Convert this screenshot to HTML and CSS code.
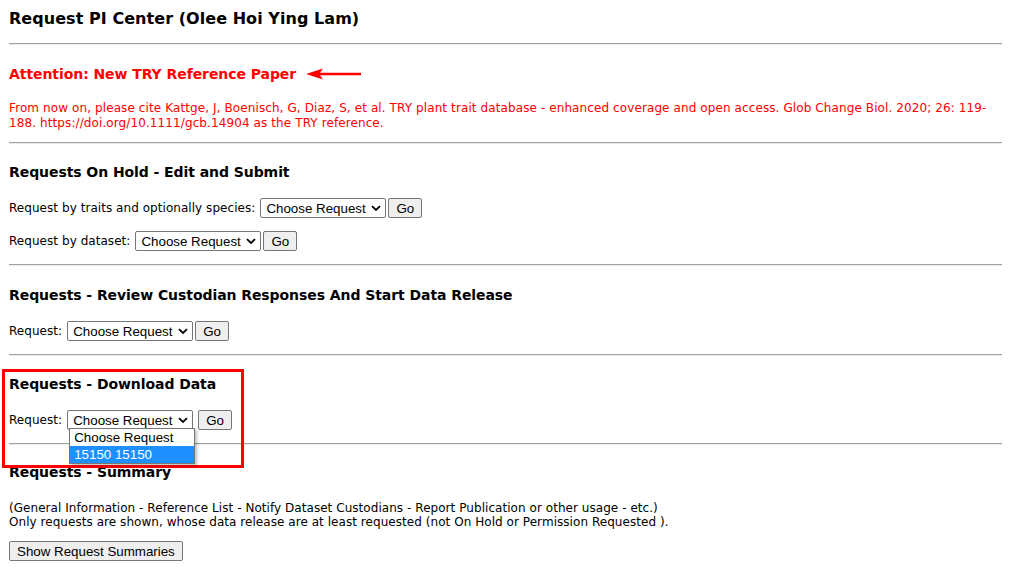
FILE: index.html
```html
<!DOCTYPE html>
<html lang="en">
<head>
<meta charset="utf-8">
<title>Request PI Center</title>
<link rel="stylesheet" href="styles.css">
</head>
<body>
<div class="page">
  <h1 class="title">Request PI Center (Olee Hoi Ying Lam)</h1>
  <hr class="rule rule-top">

  <section class="block notice">
    <h2 class="heading heading-red">Attention: New TRY Reference Paper
      <svg class="arrow" width="56" height="12" viewBox="0 0 56 12"><path d="M0 6 L17 0.5 L14 4.8 L55 4.8 L55 7.2 L14 7.2 L17 11.5 Z" fill="#ff0000"/></svg>
    </h2>
    <p class="notice-text">From now on, please cite Kattge, J, Boenisch, G, Diaz, S, et al. TRY plant trait database - enhanced coverage and open access. Glob Change Biol. 2020; 26: 119-188. https://doi.org/10.1111/gcb.14904 as the TRY reference.</p>
  </section>
  <hr class="rule">

  <section class="block">
    <h2 class="heading">Requests On Hold - Edit and Submit</h2>
    <div class="row">
      <span class="label">Request by traits and optionally species:</span>
      <span class="select">Choose Request<svg class="chev" width="10" height="7" viewBox="0 0 10 7"><path d="M1 1.2 L5 5 L9 1.2" fill="none" stroke="#000" stroke-width="1.8"/></svg></span>
      <button class="btn">Go</button>
    </div>
    <div class="row row-second">
      <span class="label">Request by dataset:</span>
      <span class="select">Choose Request<svg class="chev" width="10" height="7" viewBox="0 0 10 7"><path d="M1 1.2 L5 5 L9 1.2" fill="none" stroke="#000" stroke-width="1.8"/></svg></span>
      <button class="btn">Go</button>
    </div>
  </section>
  <hr class="rule">

  <section class="block block-review">
    <h2 class="heading">Requests - Review Custodian Responses And Start Data Release</h2>
    <div class="row">
      <span class="label">Request:</span>
      <span class="select">Choose Request<svg class="chev" width="10" height="7" viewBox="0 0 10 7"><path d="M1 1.2 L5 5 L9 1.2" fill="none" stroke="#000" stroke-width="1.8"/></svg></span>
      <button class="btn">Go</button>
    </div>
  </section>
  <hr class="rule">

  <section class="block download">
    <h2 class="heading">Requests - Download Data</h2>
    <div class="row">
      <span class="label">Request:</span>
      <span class="select select-open">Choose Request<svg class="chev" width="10" height="7" viewBox="0 0 10 7"><path d="M1 1.2 L5 5 L9 1.2" fill="none" stroke="#000" stroke-width="1.8"/></svg>
        <span class="popup">
          <span class="opt">Choose Request</span>
          <span class="opt opt-active">15150 15150</span>
        </span>
      </span>
      <button class="btn btn-spaced">Go</button>
    </div>
    <div class="highlight"></div>
  </section>
  <hr class="rule">

  <section class="block block-summary">
    <h2 class="heading">Requests - Summary</h2>
    <p class="summary-text">(General Information - Reference List - Notify Dataset Custodians - Report Publication or other usage - etc.)<br>Only requests are shown, whose data release are at least requested (not On Hold or Permission Requested ).</p>
    <button class="btn btn-wide">Show Request Summaries</button>
  </section>
</div>
</body>
</html>
```

FILE: styles.css
```css
html, body {
  margin: 0;
  padding: 0;
  background: #ffffff;
}

body {
  font-family: "DejaVu Sans", Verdana, sans-serif;
  font-size: 12px;
  letter-spacing: 0.05px;
  color: #000;
}

.page {
  padding: 9px 9px 0 9px;
  width: 993px;
}

.title {
  margin: 0;
  font-size: 16px;
  line-height: 20px;
  font-weight: bold;
  letter-spacing: 0.05px;
}

.rule {
  margin: 0;
  border: none;
  border-top: 1px solid #a0a0a0;
  border-bottom: 1px solid #ececec;
  height: 0;
}

.rule-top {
  margin-top: 14px;
}

.block {
  position: relative;
  padding-top: 18px;
  padding-bottom: 12px;
}

.block-review {
  padding-top: 19px;
}

.block-summary {
  padding-top: 17px;
}

.notice {
  padding-top: 19px;
  padding-bottom: 0;
}

.heading {
  margin: 0;
  font-size: 14px;
  line-height: 20px;
  font-weight: bold;
  letter-spacing: -0.07px;
  display: flex;
  align-items: center;
  gap: 10px;
}

.heading-red {
  color: #ff0000;
}

.arrow {
  display: block;
}

.notice-text {
  margin: 17px 0 11px 0;
  color: #ff0000;
  line-height: 15px;
  letter-spacing: 0.1px;
}

.row {
  display: flex;
  align-items: center;
  height: 22px;
  margin-top: 15px;
}

.row-second {
  margin-top: 11px;
}

.label {
  margin-right: 5px;
}

.select {
  position: relative;
  display: inline-flex;
  align-items: center;
  justify-content: space-between;
  box-sizing: border-box;
  width: 126px;
  height: 20px;
  padding: 0 4px 0 5px;
  border: 1px solid #767676;
  border-radius: 2px;
  background: #fff;
  font-family: "Liberation Sans", Arial, sans-serif;
  font-size: 13.33px;
  letter-spacing: 0;
  color: #000;
}

.chev {
  display: block;
}

.btn {
  box-sizing: border-box;
  height: 20px;
  margin-left: 2px;
  padding: 0 7px;
  border: 1px solid #767676;
  border-radius: 2px;
  background: #efefef;
  font-family: "Liberation Sans", Arial, sans-serif;
  font-size: 13.33px;
  letter-spacing: 0;
  color: #000;
}

.btn-spaced {
  margin-left: 5px;
}

.popup {
  position: absolute;
  left: 1px;
  top: 17px;
  width: 126px;
  box-sizing: border-box;
  border: 1px solid #767676;
  background: #fff;
  box-shadow: 2px 2px 3px rgba(0,0,0,0.25);
  display: flex;
  flex-direction: column;
  z-index: 5;
}

.opt {
  display: block;
  height: 17px;
  line-height: 17px;
  padding: 0 4px;
}

.opt-active {
  background: #1e90ff;
  color: #fff;
}

.highlight {
  position: absolute;
  left: -7px;
  top: 13px;
  width: 236px;
  height: 93px;
  border: 3px solid #ff0000;
  z-index: 4;
  pointer-events: none;
}

.summary-text {
  margin: 19px 0 0 0;
  line-height: 14px;
}

.btn-wide {
  margin: 12px 0 0 0;
  height: 20px;
  padding: 0 7px;
}
```
